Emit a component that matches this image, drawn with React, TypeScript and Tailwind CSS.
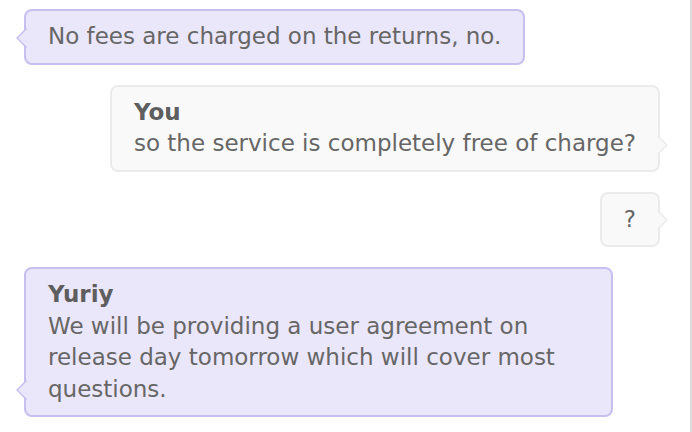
import React from "react";

type Side = "left" | "right";

function Tail({ side, fill, stroke }: { side: Side; fill: string; stroke: string }) {
  if (side === "left") {
    return (
      <svg
        className="absolute bottom-[15px] left-[-10px]"
        width="11"
        height="20"
        viewBox="0 0 11 20"
      >
        <path d="M11 0.5 L1 10 L11 19.5 Z" fill={fill} stroke="none" />
        <path d="M10.5 0.5 L1 10 L10.5 19.5" fill="none" stroke={stroke} strokeWidth="1.5" />
      </svg>
    );
  }
  return (
    <svg
      className="absolute bottom-[15px] right-[-10px]"
      width="11"
      height="20"
      viewBox="0 0 11 20"
    >
      <path d="M0 0.5 L10 10 L0 19.5 Z" fill={fill} stroke="none" />
      <path d="M0.5 0.5 L10 10 L0.5 19.5" fill="none" stroke={stroke} strokeWidth="1.5" />
    </svg>
  );
}

function Bubble({
  side,
  name,
  children,
}: {
  side: Side;
  name?: string;
  children: React.ReactNode;
}) {
  const purple = side === "left";
  const fill = purple ? "#ebe7fa" : "#f9f9f9";
  const stroke = purple ? "#c8bff0" : "#ebebeb";
  return (
    <div className={purple ? "flex justify-start" : "flex justify-end"}>
      <div
        className={
          purple
            ? "relative max-w-[589px] rounded-[8px] border-2 border-[#c8bff0] bg-[#ebe7fa] px-[22px] py-[10px] text-[23px] leading-[31.5px] text-[#666666]"
            : "relative max-w-[589px] rounded-[8px] border-2 border-[#ebebeb] bg-[#f9f9f9] px-[22px] py-[10px] text-[23px] leading-[31.5px] text-[#666666]"
        }
      >
        {name && <div className="font-bold text-[#5e5e5e]">{name}</div>}
        <div>{children}</div>
        <Tail side={side} fill={fill} stroke={stroke} />
      </div>
    </div>
  );
}

export default function App() {
  return (
    <div
      className="flex h-[432px] w-[692px] overflow-hidden bg-white"
      style={{ fontFamily: '"DejaVu Sans", "Noto Sans", sans-serif' }}
    >
      <div className="flex flex-1 flex-col gap-[20px] pl-[24px] pr-[30px] pt-[9px]">
        <Bubble side="left">No fees are charged on the returns, no.</Bubble>
        <Bubble side="right" name="You">
          so the service is completely free of charge?
        </Bubble>
        <Bubble side="right">?</Bubble>
        <Bubble side="left" name="Yuriy">
          We will be providing a user agreement on release day tomorrow which will cover most
          questions.
        </Bubble>
      </div>
      <div className="h-full w-[2px] bg-[#dcdcdc]" />
    </div>
  );
}
